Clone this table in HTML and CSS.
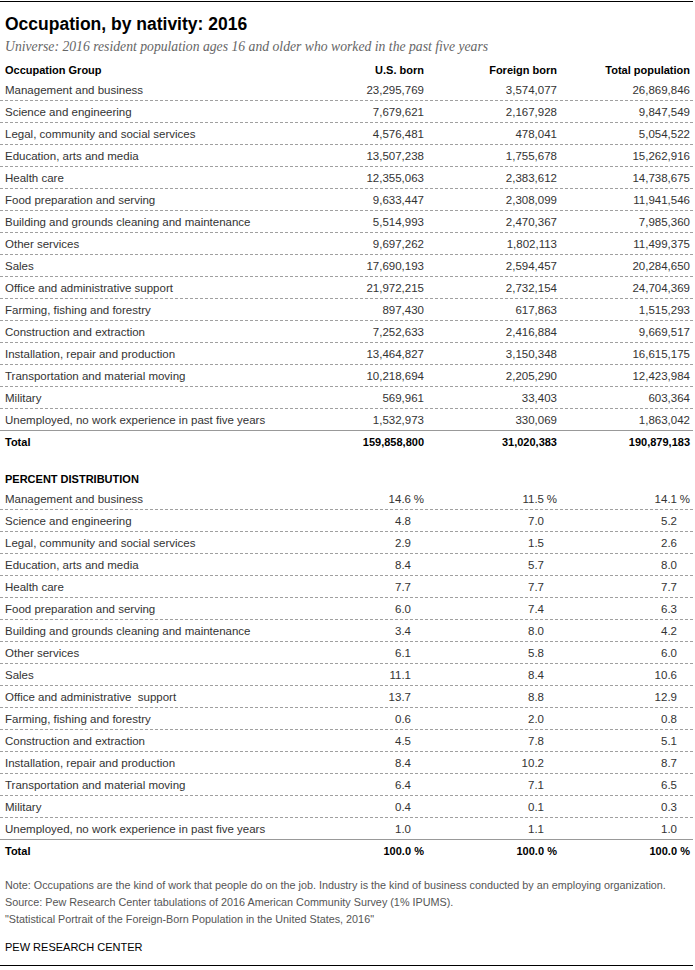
FILE: index.html
```html
<!DOCTYPE html>
<html lang="en">
<head>
<meta charset="utf-8">
<title>Occupation, by nativity: 2016</title>
<link rel="stylesheet" href="styles.css">
</head>
<body>
<div class="page">
  <h1 class="title">Occupation, by nativity: 2016</h1>
  <p class="subtitle">Universe: 2016 resident population ages 16 and older who worked in the past five years</p>

  <div class="table">
    <div class="row head">
      <div class="label">Occupation Group</div>
      <div class="num">U.S. born</div>
      <div class="num">Foreign born</div>
      <div class="num">Total population</div>
    </div>
    <div class="row"><div class="label">Management and business</div><div class="num">23,295,769</div><div class="num">3,574,077</div><div class="num">26,869,846</div></div>
    <div class="row"><div class="label">Science and engineering</div><div class="num">7,679,621</div><div class="num">2,167,928</div><div class="num">9,847,549</div></div>
    <div class="row"><div class="label">Legal, community and social services</div><div class="num">4,576,481</div><div class="num">478,041</div><div class="num">5,054,522</div></div>
    <div class="row"><div class="label">Education, arts and media</div><div class="num">13,507,238</div><div class="num">1,755,678</div><div class="num">15,262,916</div></div>
    <div class="row"><div class="label">Health care</div><div class="num">12,355,063</div><div class="num">2,383,612</div><div class="num">14,738,675</div></div>
    <div class="row"><div class="label">Food preparation and serving</div><div class="num">9,633,447</div><div class="num">2,308,099</div><div class="num">11,941,546</div></div>
    <div class="row"><div class="label">Building and grounds cleaning and maintenance</div><div class="num">5,514,993</div><div class="num">2,470,367</div><div class="num">7,985,360</div></div>
    <div class="row"><div class="label">Other services</div><div class="num">9,697,262</div><div class="num">1,802,113</div><div class="num">11,499,375</div></div>
    <div class="row"><div class="label">Sales</div><div class="num">17,690,193</div><div class="num">2,594,457</div><div class="num">20,284,650</div></div>
    <div class="row"><div class="label">Office and administrative support</div><div class="num">21,972,215</div><div class="num">2,732,154</div><div class="num">24,704,369</div></div>
    <div class="row"><div class="label">Farming, fishing and forestry</div><div class="num">897,430</div><div class="num">617,863</div><div class="num">1,515,293</div></div>
    <div class="row"><div class="label">Construction and extraction</div><div class="num">7,252,633</div><div class="num">2,416,884</div><div class="num">9,669,517</div></div>
    <div class="row"><div class="label">Installation, repair and production</div><div class="num">13,464,827</div><div class="num">3,150,348</div><div class="num">16,615,175</div></div>
    <div class="row"><div class="label">Transportation and material moving</div><div class="num">10,218,694</div><div class="num">2,205,290</div><div class="num">12,423,984</div></div>
    <div class="row"><div class="label">Military</div><div class="num">569,961</div><div class="num">33,403</div><div class="num">603,364</div></div>
    <div class="row last"><div class="label">Unemployed, no work experience in past five years</div><div class="num">1,532,973</div><div class="num">330,069</div><div class="num">1,863,042</div></div>
    <div class="row total"><div class="label">Total</div><div class="num">159,858,800</div><div class="num">31,020,383</div><div class="num">190,879,183</div></div>
  </div>

  <div class="table pct-table">
    <div class="row head">
      <div class="label">PERCENT DISTRIBUTION</div>
    </div>
    <div class="row"><div class="label">Management and business</div><div class="num">14.6<span class="sfx">%</span></div><div class="num">11.5<span class="sfx">%</span></div><div class="num">14.1<span class="sfx">%</span></div></div>
    <div class="row"><div class="label">Science and engineering</div><div class="num">4.8<span class="sfx"></span></div><div class="num">7.0<span class="sfx"></span></div><div class="num">5.2<span class="sfx"></span></div></div>
    <div class="row"><div class="label">Legal, community and social services</div><div class="num">2.9<span class="sfx"></span></div><div class="num">1.5<span class="sfx"></span></div><div class="num">2.6<span class="sfx"></span></div></div>
    <div class="row"><div class="label">Education, arts and media</div><div class="num">8.4<span class="sfx"></span></div><div class="num">5.7<span class="sfx"></span></div><div class="num">8.0<span class="sfx"></span></div></div>
    <div class="row"><div class="label">Health care</div><div class="num">7.7<span class="sfx"></span></div><div class="num">7.7<span class="sfx"></span></div><div class="num">7.7<span class="sfx"></span></div></div>
    <div class="row"><div class="label">Food preparation and serving</div><div class="num">6.0<span class="sfx"></span></div><div class="num">7.4<span class="sfx"></span></div><div class="num">6.3<span class="sfx"></span></div></div>
    <div class="row"><div class="label">Building and grounds cleaning and maintenance</div><div class="num">3.4<span class="sfx"></span></div><div class="num">8.0<span class="sfx"></span></div><div class="num">4.2<span class="sfx"></span></div></div>
    <div class="row"><div class="label">Other services</div><div class="num">6.1<span class="sfx"></span></div><div class="num">5.8<span class="sfx"></span></div><div class="num">6.0<span class="sfx"></span></div></div>
    <div class="row"><div class="label">Sales</div><div class="num">11.1<span class="sfx"></span></div><div class="num">8.4<span class="sfx"></span></div><div class="num">10.6<span class="sfx"></span></div></div>
    <div class="row"><div class="label">Office and administrative&nbsp; support</div><div class="num">13.7<span class="sfx"></span></div><div class="num">8.8<span class="sfx"></span></div><div class="num">12.9<span class="sfx"></span></div></div>
    <div class="row"><div class="label">Farming, fishing and forestry</div><div class="num">0.6<span class="sfx"></span></div><div class="num">2.0<span class="sfx"></span></div><div class="num">0.8<span class="sfx"></span></div></div>
    <div class="row"><div class="label">Construction and extraction</div><div class="num">4.5<span class="sfx"></span></div><div class="num">7.8<span class="sfx"></span></div><div class="num">5.1<span class="sfx"></span></div></div>
    <div class="row"><div class="label">Installation, repair and production</div><div class="num">8.4<span class="sfx"></span></div><div class="num">10.2<span class="sfx"></span></div><div class="num">8.7<span class="sfx"></span></div></div>
    <div class="row"><div class="label">Transportation and material moving</div><div class="num">6.4<span class="sfx"></span></div><div class="num">7.1<span class="sfx"></span></div><div class="num">6.5<span class="sfx"></span></div></div>
    <div class="row"><div class="label">Military</div><div class="num">0.4<span class="sfx"></span></div><div class="num">0.1<span class="sfx"></span></div><div class="num">0.3<span class="sfx"></span></div></div>
    <div class="row last"><div class="label">Unemployed, no work experience in past five years</div><div class="num">1.0<span class="sfx"></span></div><div class="num">1.1<span class="sfx"></span></div><div class="num">1.0<span class="sfx"></span></div></div>
    <div class="row total"><div class="label">Total</div><div class="num">100.0<span class="sfx">%</span></div><div class="num">100.0<span class="sfx">%</span></div><div class="num">100.0<span class="sfx">%</span></div></div>
  </div>

  <div class="notes">
    <p>Note: Occupations are the kind of work that people do on the job. Industry is the kind of business conducted by an employing organization.</p>
    <p>Source: Pew Research Center tabulations of 2016 American Community Survey (1% IPUMS).</p>
    <p>"Statistical Portrait of the Foreign-Born Population in the United States, 2016"</p>
  </div>
  <p class="brand">PEW RESEARCH CENTER</p>
</div>
</body>
</html>
```

FILE: styles.css
```css
* { box-sizing: border-box; }

html, body {
  margin: 0;
  padding: 0;
  background: #fff;
}

body {
  font-family: "Liberation Sans", Arial, sans-serif;
  color: #333;
}

.page {
  width: 693px;
  margin-top: 1px;
  border-top: 1px solid #000;
  border-bottom: 1px solid #000;
}

.title {
  margin: 0;
  padding: 11px 5px 0;
  font-size: 17.5px;
  line-height: 22px;
  font-weight: bold;
  color: #000;
}

.subtitle {
  margin: 0;
  padding: 3px 5px 0;
  font-family: "Liberation Serif", "Times New Roman", serif;
  font-style: italic;
  font-size: 13.7px;
  line-height: 18px;
  color: #666;
}

.table {
  margin-top: 5px;
}

.row {
  display: grid;
  grid-template-columns: 1fr 133px 133px 133px;
  height: 22px;
  align-items: center;
  padding: 0 3px 0 5px;
  font-size: 11.5px;
  border-bottom: 1px dashed #a0a0a0;
}

.row.head {
  height: 18px;
  border-bottom: none;
  font-size: 11px;
  font-weight: bold;
  color: #000;
}

.row.last {
  border-bottom: 1px solid #999;
}

.row.total {
  border-bottom: none;
  font-weight: bold;
  font-size: 11px;
  color: #000;
}

.num {
  display: flex;
  justify-content: flex-end;
  white-space: nowrap;
}

.label {
  white-space: nowrap;
}

.pct-table {
  margin-top: 17px;
}

.sfx {
  display: inline-block;
  width: 13px;
  text-align: right;
}

.notes {
  margin-top: 15px;
  padding: 0 5px;
  font-size: 10.8px;
  line-height: 17px;
  color: #555;
}

.notes p {
  margin: 0;
}

.brand {
  margin: 11px 0 0;
  padding: 0 5px 9px;
  font-size: 11px;
  line-height: 17px;
  color: #000;
}
```
